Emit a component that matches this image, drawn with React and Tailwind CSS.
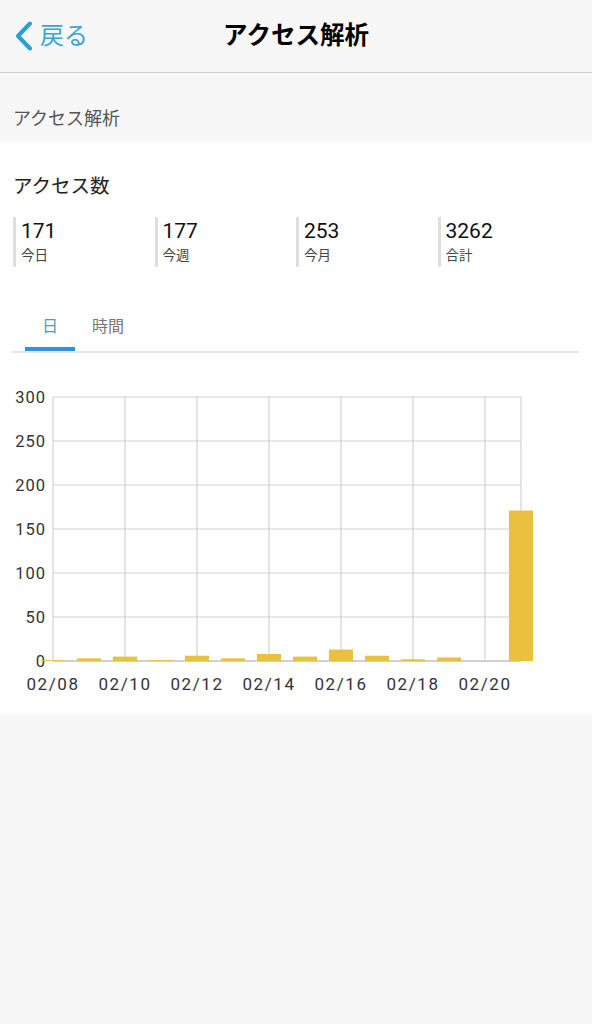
import React from "react";

const values = [1, 3, 5, 1, 6, 3, 8, 5, 13, 6, 2, 4, 0, 171];
const labels = ["02/08", "02/10", "02/12", "02/14", "02/16", "02/18", "02/20"];

function Chart() {
  const x0 = 53;
  const x1 = 521;
  const yTop = 17;
  const yBot = 281;
  const step = 36;
  const scale = (yBot - yTop) / 300;
  const yTicks = [300, 250, 200, 150, 100, 50, 0];
  return (
    <svg width="592" height="330" viewBox="0 0 592 330" className="block">
      {yTicks.map((t) => {
        const y = yBot - t * scale;
        return (
          <g key={t}>
            <line x1={x0} x2={x1} y1={y} y2={y} stroke="#d2d2d2" strokeWidth="1.2" />
            <text
              x="46"
              y={y + 6}
              textAnchor="end"
              fontSize="16.5"
              letterSpacing="1"
              fill="#333"
              fontFamily="Roboto, 'Liberation Sans', sans-serif"
            >
              {t}
            </text>
          </g>
        );
      })}
      {[0, 1, 2, 3, 4, 5, 6].map((k) => (
        <line key={k} x1={x0 + 72 * k} x2={x0 + 72 * k} y1={yTop} y2={yBot} stroke="#d2d2d2" strokeWidth="1.2" />
      ))}
      <line x1={x1} x2={x1} y1={yTop} y2={yBot} stroke="#d2d2d2" strokeWidth="1.2" />
      <line x1={x0} x2={x1} y1={yBot} y2={yBot} stroke="#c8c8c8" strokeWidth="1.4" />
      {values.map((v, i) => {
        const cx = x0 + step * i;
        const h = Math.max(v * scale, 0.8);
        if (v === 0) return null;
        return <rect key={i} x={cx - 12} y={yBot - h} width="24" height={h} fill="#ecc03f" />;
      })}
      {labels.map((l, k) => (
        <text
          key={l}
          x={x0 + 72 * k}
          y="310"
          textAnchor="middle"
          fontSize="17"
          letterSpacing="1.6"
          fill="#333"
          fontFamily="Roboto, 'Liberation Sans', sans-serif"
        >
          {l}
        </text>
      ))}
    </svg>
  );
}

export default function App() {
  const stats = [
    ["171", "今日"],
    ["177", "今週"],
    ["253", "今月"],
    ["3262", "合計"],
  ];
  return (
    <div
      className="min-h-[1024px] bg-[#f7f7f8] text-[#111]"
      style={{ fontFamily: "Roboto, 'Noto Sans CJK JP', sans-serif" }}
    >
      <header className="h-[73px] grid grid-cols-[1fr_auto_1fr] items-center border-b-[1.5px] border-[#cfcfd1] bg-[#f7f7f8]">
        <div className="flex items-center pl-[14px]">
          <svg width="20" height="30" viewBox="0 0 20 30" className="mr-[6px]">
            <path d="M16 2.5 L4 15 L16 27.5" fill="none" stroke="#2a9fcc" strokeWidth="4" strokeLinecap="round" strokeLinejoin="round" />
          </svg>
          <span className="text-[24px] leading-none text-[#3aa6d2]">戻る</span>
        </div>
        <h1 className="text-[24.5px] font-bold leading-none text-black">アクセス解析</h1>
        <div />
      </header>

      <div className="h-[69px] flex items-end pl-[13px] pb-[11px]">
        <span className="text-[18px] leading-[24px] text-[#555]">アクセス解析</span>
      </div>

      <section className="bg-white pb-[4px]">
        <div className="px-[13px] pt-[31px]">
          <h2 className="text-[19.5px] leading-[28px] text-[#222]">アクセス数</h2>
          <div className="mt-[16px] grid grid-cols-4">
            {stats.map(([n, l]) => (
              <div key={l} className="h-[50px] border-l-[3px] border-[#dedede] pl-[5px] flex flex-col">
                <span className="text-[21px] leading-[26px] text-[#111] mt-[1px]">{n}</span>
                <span className="text-[13.5px] leading-[18px] text-[#444] mt-[2px]">{l}</span>
              </div>
            ))}
          </div>

          <div className="mt-[48px] ml-[-1px] border-b-2 border-[#e6e6e6] flex">
            <div className="w-[50px] ml-[13px] flex flex-col items-center">
              <span className="text-[16px] leading-[24px] text-[#3f9fd6]">日</span>
              <div className="mt-[8px] h-[4px] w-full bg-[#2a96dc]" />
            </div>
            <div className="w-[66px] flex flex-col items-center">
              <span className="text-[16px] leading-[24px] text-[#777]">時間</span>
            </div>
          </div>
        </div>
        <div className="mt-[27px]">
          <Chart />
        </div>
      </section>
    </div>
  );
}
